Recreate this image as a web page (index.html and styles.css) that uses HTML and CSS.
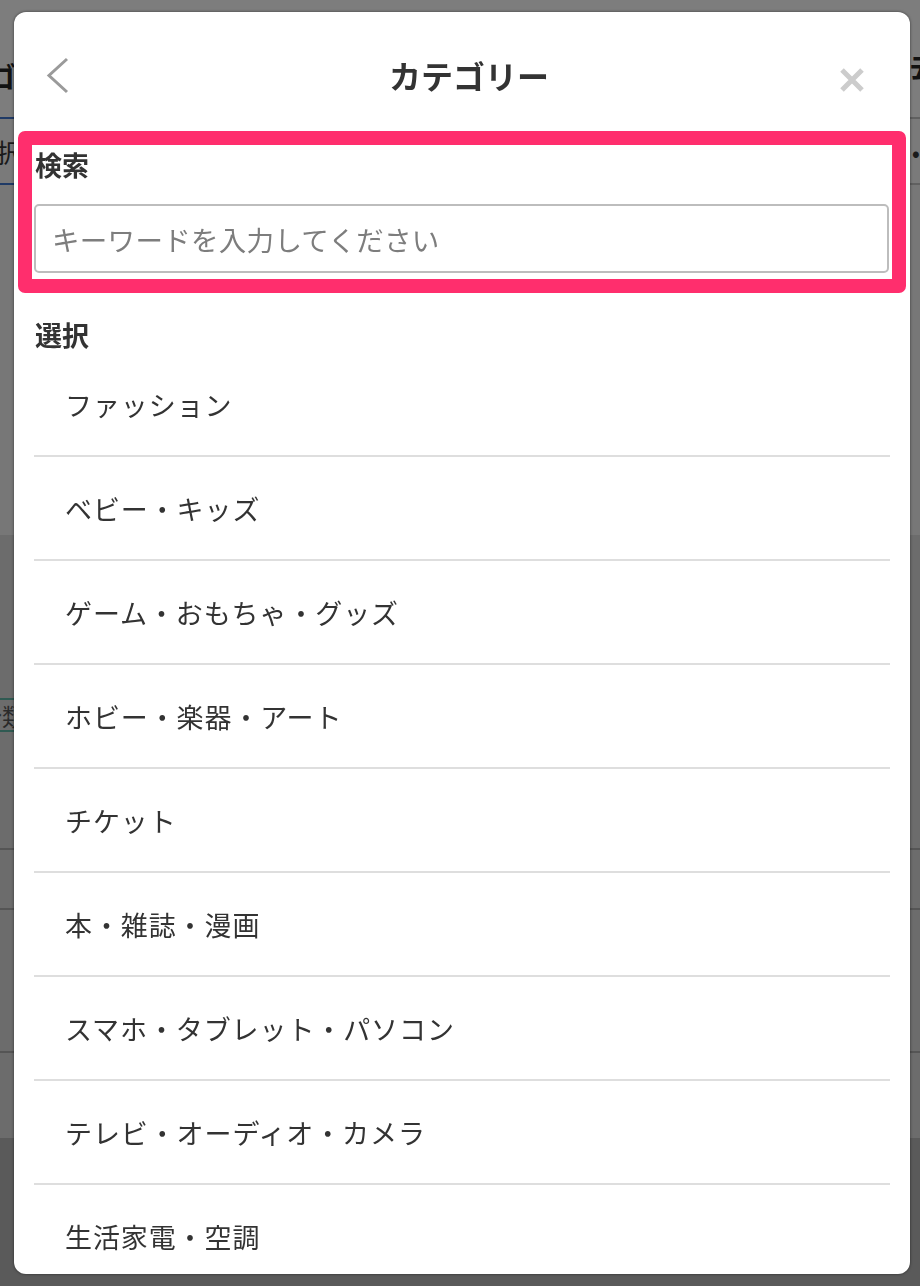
FILE: index.html
```html
<!DOCTYPE html>
<html lang="ja">
<head>
<meta charset="utf-8">
<title>カテゴリー</title>
<link rel="stylesheet" href="styles.css">
</head>
<body>
<div class="bg">
  <div class="bg-head"><span class="bg-l">ロゴ</span><span class="bg-r">去</span></div>
  <div class="bg-tabs">
    <div class="bg-tab-a"><span class="bg-l2">選択</span></div>
    <div class="bg-tab-b"><span class="bg-r2">•</span></div>
  </div>
  <div class="bg-mid"></div>
  <div class="bg-list">
    <div class="bg-gap1"></div>
    <div class="bg-tag"><span class="bg-l3">分類</span></div>
    <div class="bg-row1"></div>
    <div class="bg-row2"></div>
    <div class="bg-row3"></div>
  </div>
  <div class="bg-foot"></div>
</div>

<div class="modal">
  <header class="modal-head">
    <button class="icon-btn back" aria-label="戻る">
      <svg width="24" height="40" viewBox="0 0 24 40"><path d="M21 3 L3 19.5 L21 36" fill="none" stroke="#9a9a9a" stroke-width="3"/></svg>
    </button>
    <h1 class="modal-title">カテゴリー</h1>
    <button class="icon-btn close" aria-label="閉じる">
      <svg width="28" height="28" viewBox="0 0 28 28"><path d="M4 4 L24 24 M24 4 L4 24" fill="none" stroke="#cccccc" stroke-width="5"/></svg>
    </button>
  </header>

  <section class="search">
    <div class="label">検索</div>
    <input class="search-input" type="text" placeholder="キーワードを入力してください">
    <div class="highlight"></div>
  </section>

  <section class="select">
    <div class="label">選択</div>
    <ul class="cat-list">
      <li class="cat">ファッション</li>
      <li class="cat">ベビー・キッズ</li>
      <li class="cat">ゲーム・おもちゃ・グッズ</li>
      <li class="cat">ホビー・楽器・アート</li>
      <li class="cat">チケット</li>
      <li class="cat">本・雑誌・漫画</li>
      <li class="cat">スマホ・タブレット・パソコン</li>
      <li class="cat">テレビ・オーディオ・カメラ</li>
      <li class="cat">生活家電・空調</li>
    </ul>
  </section>
</div>
</body>
</html>
```

FILE: styles.css
```css
* { box-sizing: border-box; }
html, body { margin: 0; padding: 0; }
body {
  width: 920px;
  height: 1286px;
  overflow: hidden;
  background: #5a5a5a;
  font-family: "Noto Sans CJK JP", "Noto Sans", sans-serif;
}

/* dimmed page behind the modal */
.bg { width: 920px; }
.bg-head {
  height: 117px;
  background: #7d7d7d;
  display: flex;
  justify-content: space-between;
  align-items: center;
  font-size: 28px;
  font-weight: 700;
  color: #121212;
  overflow: hidden;
}
.bg-l { margin-left: -40px; margin-top: 34px; }
.bg-r { margin-right: -18px; margin-top: 14px; }
.bg-tabs {
  height: 68px;
  display: flex;
  background: #7a7a7a;
  overflow: hidden;
}
.bg-tab-a {
  width: 460px;
  border-top: 2px solid #1f3a66;
  border-bottom: 2px solid #1f3a66;
  display: flex;
  align-items: center;
  font-size: 26px;
  color: #1a1a1a;
}
.bg-l2 { margin-left: -30px; }
.bg-tab-b {
  flex: 1;
  border-top: 2px solid #606060;
  border-bottom: 2px solid #606060;
  display: flex;
  align-items: center;
  justify-content: flex-end;
  font-size: 24px;
  color: #1a1a1a;
}
.bg-r2 { margin-right: 0; }
.bg-mid { height: 350px; background: #777777; }
.bg-list { height: 603px; background: #6c6c6c; }
.bg-gap1 { height: 163px; }
.bg-tag {
  height: 34px;
  width: 200px;
  border-top: 2px solid #2f5a52;
  border-bottom: 2px solid #2f5a52;
  display: flex;
  align-items: center;
  font-size: 24px;
  color: #2a2a2a;
}
.bg-l3 { margin-left: -22px; }
.bg-row1 { height: 118px; border-bottom: 2px solid #555; }
.bg-row2 { height: 60px; border-bottom: 2px solid #555; }
.bg-row3 { height: 143px; border-bottom: 2px solid #555; }
.bg-foot { height: 150px; background: #5a5a5a; }

/* modal */
.modal {
  position: fixed;
  top: 12px;
  left: 14px;
  width: 896px;
  height: 1262px;
  background: #ffffff;
  border-radius: 12px;
  box-shadow: 0 0 3px rgba(0, 0, 0, 0.55);
  overflow: hidden;
  padding: 0 20px;
}

.modal-head {
  height: 128px;
  display: flex;
  align-items: center;
  margin: 0 -20px;
  padding: 0 30px 0 32px;
}
.icon-btn {
  background: none;
  border: 0;
  padding: 0;
  margin: 0;
  display: flex;
  align-items: center;
  justify-content: center;
}
.back { width: 24px; height: 40px; }
.close { width: 28px; height: 28px; margin-right: 14px; margin-top: 8px; }
.modal-title {
  flex: 1;
  margin: 0;
  text-align: center;
  font-size: 32px;
  font-weight: 700;
  color: #333333;
  padding-left: 30px;
  line-height: 1;
  margin-top: -2px;
}

.label {
  font-size: 27px;
  font-weight: 700;
  color: #333333;
  line-height: 34px;
  height: 34px;
  padding-left: 1px;
}

.search {
  position: relative;
  margin-top: 5px;
  padding: 3px 0 5px;
}
.search-input {
  display: block;
  width: 855px;
  height: 69px;
  margin-top: 22px;
  border: 2px solid #bdbdbd;
  border-radius: 5px;
  padding: 0 16px;
  font-family: "Noto Sans CJK JP", "Noto Sans", sans-serif;
  font-size: 27.5px;
  letter-spacing: 0.3px;
  color: #333;
  background: #fff;
  outline: none;
}
.search-input::placeholder { color: #7d7d7d; }
.highlight {
  position: absolute;
  top: -14px;
  bottom: -15px;
  left: -16px;
  right: -16px;
  border: 14px solid #ff2e6d;
  border-radius: 7px;
  pointer-events: none;
}

.select { margin-top: 40px; }
.cat-list {
  list-style: none;
  margin: 1px 0 0;
  padding: 0;
}
.cat {
  height: 104px;
  border-bottom: 2px solid #dedede;
  display: flex;
  align-items: center;
  padding-left: 31px;
  font-size: 27px;
  color: #333333;
  letter-spacing: 0.9px;
}
```
